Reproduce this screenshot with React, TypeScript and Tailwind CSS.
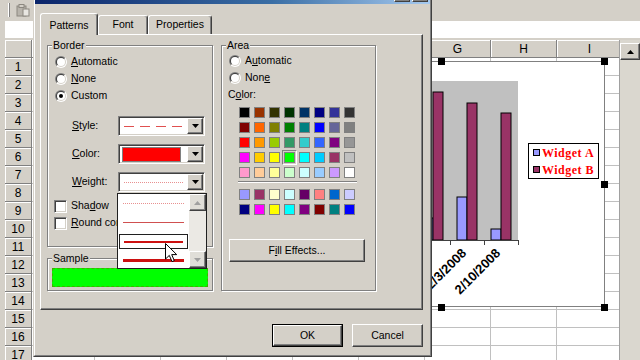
import React from "react";

const raised =
  "border border-t-white border-l-white border-r-[#404040] border-b-[#404040] shadow-[inset_-1px_-1px_0_#808080]";
const sunken =
  "border border-t-[#808080] border-l-[#808080] border-r-white border-b-white shadow-[inset_1px_1px_0_#404040,inset_-1px_-1px_0_#d4d0c8]";
const etched = "relative border border-[#808080] shadow-[inset_1px_1px_0_#fff,1px_1px_0_#fff]";

// columns A-F sit under the dialog, so only G.. show a letter
const cols: [string, number][] = [
  ["", 63],
  ["", 66],
  ["", 66],
  ["", 66],
  ["", 66],
  ["", 66],
  ["G", 66],
  ["H", 66],
  ["I", 66],
];

const palette = [
  ["#000000", "#993300", "#333300", "#003300", "#003366", "#000080", "#333399", "#333333"],
  ["#800000", "#ff6600", "#808000", "#008000", "#008080", "#0000ff", "#666699", "#808080"],
  ["#ff0000", "#ff9900", "#99cc00", "#339966", "#33cccc", "#3366ff", "#800080", "#969696"],
  ["#ff00ff", "#ffcc00", "#ffff00", "#00ff00", "#00ffff", "#00ccff", "#993366", "#c0c0c0"],
  ["#ff99cc", "#ffcc99", "#ffff99", "#ccffcc", "#ccffff", "#99ccff", "#cc99ff", "#ffffff"],
];
const chartColors = [
  ["#9999ff", "#993366", "#ffffcc", "#ccffff", "#660066", "#ff8080", "#0066cc", "#ccccff"],
  ["#000080", "#ff00ff", "#ffff00", "#00ffff", "#800080", "#800000", "#008080", "#0000ff"],
];

const Key = ({ children }: { children: React.ReactNode }) => <span className="underline">{children}</span>;

const Radio = ({ on }: { on?: boolean }) => (
  <div className="w-3 h-3 shrink-0 rounded-full p-px bg-[linear-gradient(135deg,#808080_50%,#ffffff_50%)]">
    <div className="w-full h-full rounded-full p-px bg-[linear-gradient(135deg,#404040_50%,#d4d0c8_50%)]">
      <div className="w-full h-full rounded-full bg-white flex items-center justify-center">
        {on && <div className="w-1 h-1 rounded-full bg-black" />}
      </div>
    </div>
  </div>
);

const Check = () => <div className={`w-[13px] h-[13px] shrink-0 bg-white ${sunken}`} />;

const Arrow = ({ up, gray }: { up?: boolean; gray?: boolean }) => (
  <svg width="7" height="4" viewBox="0 0 7 4" className={up ? "rotate-180" : ""}>
    <path d="M0 0h7L3.5 4z" fill={gray ? "#a0a0a0" : "#000"} />
  </svg>
);

const Combo = ({ children }: { children: React.ReactNode }) => (
  <div className={`w-[87px] h-[20px] p-px bg-white flex ${sunken}`}>
    <div className="flex-1 flex items-center px-[4px]">{children}</div>
    <div className={`w-[16px] h-full bg-[#d4d0c8] flex items-center justify-center ${raised}`}>
      <Arrow />
    </div>
  </div>
);

const Group = ({ label, className, children }: { label: string; className: string; children?: React.ReactNode }) => (
  <div className={`${etched} ${className}`}>
    <span className="absolute left-[4px] top-[-6px] px-px bg-[#d4d0c8] leading-[11px]">{label}</span>
    {children}
  </div>
);

const Sheet = () => (
  <div className="flex flex-col w-full h-full">
    <div className="h-5 flex items-center pl-[8px] gap-[6px]">
      <div className="w-[2px] h-[14px] border-l border-white border-r border-r-[#808080]" />
      <svg width="14" height="13" viewBox="0 0 14 13">
        <rect x="1" y="2" width="9" height="10" fill="#b8b4ac" stroke="#8c8880" />
        <rect x="3" y="0.5" width="5" height="3" fill="#d4d0c8" stroke="#8c8880" />
        <rect x="7" y="5" width="6" height="7" fill="#e8e6e1" stroke="#8c8880" />
      </svg>
    </div>
    <div className="h-5 pl-[5px] pt-[1px]">
      <div className="h-[17px] bg-white" />
    </div>
    <div className="flex flex-1 min-h-0 pl-[5px]">
      <div className="flex-1 overflow-hidden bg-white flex flex-col text-[11px]">
        <div className="flex h-[18px] shrink-0">
          <div className="w-[27px] shrink-0 bg-[#d4d0c8] border-r border-b border-[#808080] shadow-[inset_1px_1px_0_#fff]" />
          {cols.map(([c, w], i) => (
            <div
              key={i}
              style={{ width: w }}
              className="shrink-0 bg-[#d4d0c8] border-r border-b border-[#808080] shadow-[inset_1px_1px_0_#fff] flex items-center justify-center text-[12px]"
            >
              {c}
            </div>
          ))}
        </div>
        {Array.from({ length: 17 }, (_, r) => (
          <div key={r} className="flex h-[18px] shrink-0">
            <div className="w-[27px] shrink-0 bg-[#d4d0c8] border-r border-b border-[#808080] shadow-[inset_1px_1px_0_#fff] flex items-center justify-center text-[12px]">
              {r + 1}
            </div>
            {cols.map(([, w], i) => (
              <div key={i} style={{ width: w }} className="shrink-0 border-r border-b border-[#c0c0c0]" />
            ))}
          </div>
        ))}
      </div>
      <div className="w-[21px] shrink-0 bg-[#dad7cf] border-l border-[#a0a0a0] pt-[3px]">
        <div className={`h-[17px] bg-[#d4d0c8] flex items-center justify-center ${raised}`}>
          <Arrow up />
        </div>
      </div>
    </div>
  </div>
);

const dates = ["1/6/2008", "1/13/2008", "1/20/2008", "1/27/2008", "2/3/2008", "2/10/2008"];
const bars = [
  [150, 40],
  [160, 48],
  [145, 36],
  [157, 31],
  [136, 42],
  [168, 52],
];

const Chart = () => (
  <div className="absolute left-[278px] top-[61px] w-[327px] h-[246px] bg-white border border-[#808080]">
    <svg width="326" height="245" className="absolute left-[-1px] top-[-1px] overflow-visible">
      <rect x="36" y="20" width="204" height="159" fill="#c0c0c0" />
      {bars.map(([b, p], i) => {
        const c = 36 + 34 * i;
        return (
          <g key={i}>
            <rect x={c + 7} y={b} width="10" height={179 - b} fill="#9999ff" stroke="#000" strokeWidth="1" />
            <rect x={c + 17} y={p} width="10" height={179 - p} fill="#993366" stroke="#000" strokeWidth="1" />
          </g>
        );
      })}
      <line x1="36" y1="179.5" x2="240" y2="179.5" stroke="#404040" />
      {Array.from({ length: 7 }, (_, k) => (
        <line key={k} x1={36.5 + 34 * k} y1="179" x2={36.5 + 34 * k} y2="184" stroke="#404040" />
      ))}
      {dates.slice(4).map((d, j) => {
        const cx = 36 + 34 * (j + 4) + 17;
        return (
          <text
            key={d}
            x={cx}
            y="193"
            textAnchor="end"
            fontSize="13"
            fontWeight="bold"
            fontFamily="Liberation Sans, Arial, sans-serif"
            transform={`rotate(-45 ${cx} 193)`}
          >
            {d}
          </text>
        );
      })}
      <rect x="250.5" y="82.5" width="70" height="35" fill="#fff" stroke="#000" />
      <rect x="255.5" y="88.5" width="6" height="6" fill="#9999ff" stroke="#000" />
      <text x="264" y="96" fontSize="12" fontWeight="bold" fill="#ff0000" letterSpacing="0.5" fontFamily="Liberation Serif, serif">
        Widget A
      </text>
      <rect x="255.5" y="105.5" width="6" height="6" fill="#993366" stroke="#000" />
      <text x="264" y="113" fontSize="12" fontWeight="bold" fill="#ff0000" letterSpacing="0.5" fontFamily="Liberation Serif, serif">
        Widget B
      </text>
    </svg>
    {[
      [-4, -4],
      [159, -4],
      [322, -4],
      [322, 119],
      [322, 242],
      [159, 242],
      [-4, 242],
    ].map(([l, t], i) => (
      <div key={i} style={{ left: l, top: t }} className="absolute w-[7px] h-[7px] bg-black" />
    ))}
  </div>
);

const Swatch = ({ color, selected }: { color: string; selected?: boolean }) => (
  <div
    className={`w-[15px] h-[15px] flex items-center justify-center ${
      selected ? "border border-t-[#808080] border-l-[#808080] border-r-white border-b-white" : ""
    }`}
  >
    <div style={{ backgroundColor: color }} className="w-[11px] h-[11px] border border-[#808080]" />
  </div>
);

const SwatchRows = ({ rows, selected }: { rows: string[][]; selected?: [number, number] }) => (
  <div className="flex flex-col">
    {rows.map((row, r) => (
      <div key={r} className="flex">
        {row.map((c, i) => (
          <Swatch key={i} color={c} selected={!!selected && selected[0] === r && selected[1] === i} />
        ))}
      </div>
    ))}
  </div>
);

const Dialog = () => (
  <div className="absolute left-[33px] top-[-16px] w-[399px] h-[373px] bg-[#d4d0c8] border border-t-[#d4d0c8] border-l-[#d4d0c8] border-r-[#404040] border-b-[#404040]">
    <div className="h-full border border-t-white border-l-white border-r-[#808080] border-b-[#808080] flex flex-col">
      <div className="h-[18px] shrink-0 bg-[linear-gradient(90deg,#0a246a,#3a6ea5_60%,#a6caf0)] flex justify-end items-start pt-[2px] pr-[2px] gap-[2px]">
        <div className={`w-[16px] h-[14px] bg-[#d4d0c8] ${raised}`} />
        <div className={`w-[16px] h-[14px] bg-[#d4d0c8] ${raised}`} />
      </div>
      <div className="pl-[5px] pt-[9px] flex flex-col">
        <div className="flex items-start h-[21px]">
          <div className="relative z-10 w-[58px] h-[22px] pt-[2px] bg-[#d4d0c8] flex items-center justify-center rounded-t-[3px] border-l border-t border-white border-r border-r-[#404040] shadow-[inset_-1px_0_0_#808080]">
            Patterns
          </div>
          <div className="mt-[2px] w-[50px] h-[19px] flex items-center justify-center rounded-t-[3px] border-l border-t border-white border-r border-r-[#404040] shadow-[inset_-1px_0_0_#808080]">
            Font
          </div>
          <div className="mt-[2px] w-[64px] h-[19px] flex items-center justify-center rounded-t-[3px] border-l border-t border-white border-r border-r-[#404040] shadow-[inset_-1px_0_0_#808080]">
            Properties
          </div>
        </div>
        <div className={`w-[383px] h-[276px] pl-[6px] pt-[10px] flex gap-[8px] ${raised}`}>
          <div className="w-[166px] flex flex-col gap-[11px]">
            <Group label="Border" className="h-[202px]">
              <div className="flex flex-col pl-[7px] pt-[8px]">
                <div className="flex flex-col gap-[1px]">
                  <div className="h-[16px] flex items-center gap-[4px]">
                    <Radio />
                    <span>
                      <Key>A</Key>utomatic
                    </span>
                  </div>
                  <div className="h-[16px] flex items-center gap-[4px]">
                    <Radio />
                    <span>
                      <Key>N</Key>one
                    </span>
                  </div>
                  <div className="h-[16px] flex items-center gap-[4px]">
                    <Radio on />
                    <span>Custom</span>
                  </div>
                </div>
                <div className="flex flex-col gap-[8px] mt-[12px]">
                  <div className="h-[20px] flex items-center">
                    <span className="ml-[17px] w-[46px]">
                      <Key>S</Key>tyle:
                    </span>
                    <Combo>
                      <div className="w-full h-px bg-[repeating-linear-gradient(90deg,#e05050_0_10px,transparent_10px_16px)]" />
                    </Combo>
                  </div>
                  <div className="h-[20px] flex items-center">
                    <span className="ml-[17px] w-[46px]">
                      <Key>C</Key>olor:
                    </span>
                    <Combo>
                      <div className="w-full h-[15px] -mx-[2px] bg-[#ff0000] border border-[#808080]" />
                    </Combo>
                  </div>
                  <div className="h-[20px] flex items-center">
                    <span className="ml-[17px] w-[46px]">
                      <Key>W</Key>eight:
                    </span>
                    <Combo>
                      <div className="w-full border-t border-dotted border-[#e89090]" />
                    </Combo>
                  </div>
                </div>
                <div className="flex flex-col gap-[1px] mt-[6px] -ml-[1px]">
                  <div className="h-[16px] flex items-center gap-[4px]">
                    <Check />
                    <span>
                      Sha<Key>d</Key>ow
                    </span>
                  </div>
                  <div className="h-[16px] flex items-center gap-[4px]">
                    <Check />
                    <span>
                      <Key>R</Key>ound corners
                    </span>
                  </div>
                </div>
              </div>
            </Group>
            <Group label="Sample" className="h-[33px] pl-[4px] pt-[9px]">
              <div className="w-[156px] h-[19px] bg-[#00ff00] border border-dashed border-[#40b000]" />
            </Group>
          </div>
          <Group label="Area" className="w-[155px] h-[246px]">
            <div className="flex flex-col pl-[7px] pt-[7px]">
              <div className="flex flex-col gap-[1px]">
                <div className="h-[16px] flex items-center gap-[4px]">
                  <Radio />
                  <span>
                    A<Key>u</Key>tomatic
                  </span>
                </div>
                <div className="h-[16px] flex items-center gap-[4px]">
                  <Radio />
                  <span>
                    Non<Key>e</Key>
                  </span>
                </div>
                <div className="h-[16px] flex items-center -ml-[1px]">
                  <span>
                    C<Key>o</Key>lor:
                  </span>
                </div>
              </div>
              <div className="ml-[8px] mt-[2px] flex flex-col">
                <SwatchRows rows={palette} selected={[3, 3]} />
                <div className="h-[7px] pt-[1px]">
                  <div className="w-[119px] ml-px h-[2px] border-t border-[#808080] border-b border-b-white" />
                </div>
                <SwatchRows rows={chartColors} />
              </div>
              <div className={`mt-[22px] w-[136px] h-[23px] flex items-center justify-center ${raised}`}>
                <span>
                  F<Key>i</Key>ll Effects...
                </span>
              </div>
            </div>
          </Group>
        </div>
        <div className="w-[383px] mt-[14px] flex justify-end gap-[9px]">
          <div className="w-[71px] h-[23px] border border-black">
            <div className={`w-full h-full flex items-center justify-center ${raised}`}>OK</div>
          </div>
          <div className={`w-[71px] h-[23px] flex items-center justify-center ${raised}`}>Cancel</div>
        </div>
      </div>
    </div>
  </div>
);

const weights = [
  "border-t border-dotted border-[#e89090]",
  "border-t border-[#d05050]",
  "border-t-2 border-[#cc1010]",
  "border-t-[3px] border-[#cc1010]",
];

const WeightList = () => (
  <div className="absolute left-[117px] top-[193px] w-[90px] h-[76px] bg-white border border-[#202020] flex overflow-hidden">
    <div className="flex-1 flex flex-col">
      {weights.map((w, i) => (
        <div key={i} className="h-[19px] shrink-0 flex items-center px-[1px]">
          <div className={`w-full h-[15px] flex items-center px-[4px] ${i === 2 ? "border border-[#202020]" : ""}`}>
            <div className={`w-full ${w}`} />
          </div>
        </div>
      ))}
    </div>
    <div className="w-[17px] bg-[#ebe9e4] flex flex-col justify-between">
      <div className={`h-[17px] bg-[#e0ded8] flex items-center justify-center ${raised}`}>
        <Arrow up gray />
      </div>
      <div className={`h-[17px] bg-[#e0ded8] flex items-center justify-center ${raised}`}>
        <Arrow gray />
      </div>
    </div>
  </div>
);

const Cursor = () => (
  <svg width="13" height="20" viewBox="0 0 13 20" className="absolute left-[165px] top-[243px]">
    <path d="M0.5 0.5V16L4.3 12.4L7 18.6L9.3 17.6L6.7 11.6H11.7Z" fill="#fff" stroke="#000" strokeWidth="1" strokeLinejoin="round" />
  </svg>
);

const App = () => (
  <div className="relative w-[640px] h-[360px] overflow-hidden bg-[#d4d0c8] font-['Liberation_Sans',Arial,sans-serif] text-[10.5px] text-black">
    <Sheet />
    <Chart />
    <Dialog />
    <WeightList />
    <Cursor />
  </div>
);

export default App;
